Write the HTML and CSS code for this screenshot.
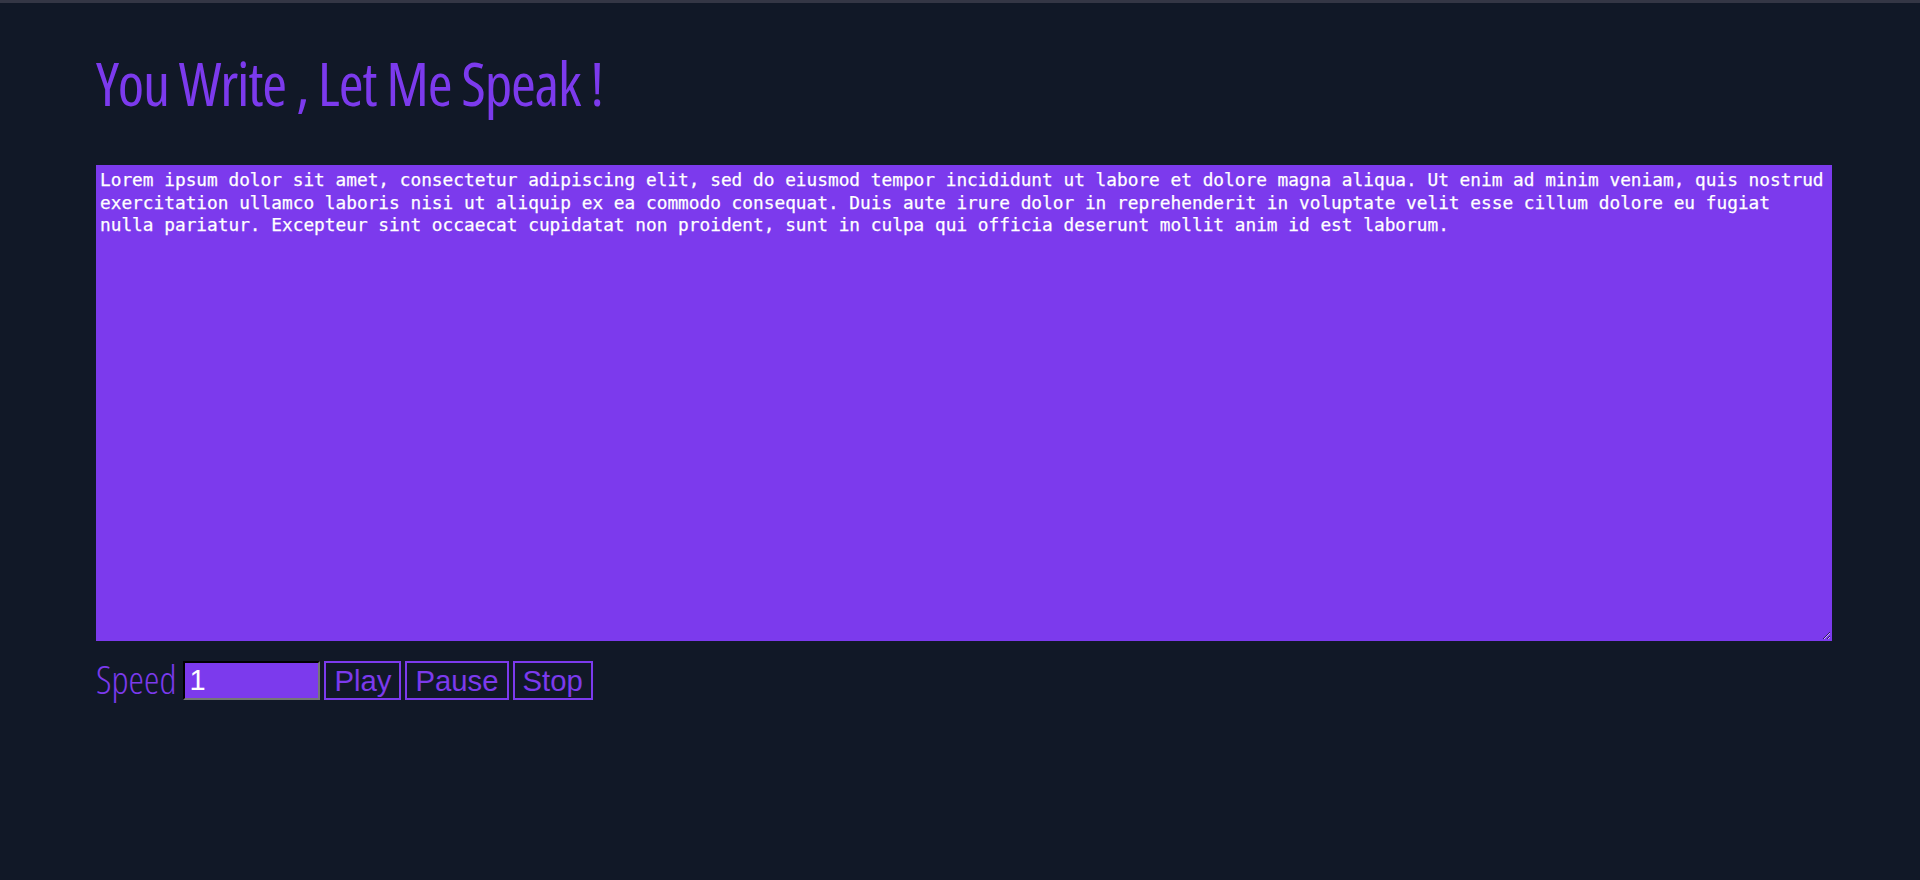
FILE: index.html
```html
<!DOCTYPE html>
<html lang="en">
<head>
<meta charset="utf-8">
<title>You Write , Let Me Speak !</title>
<link rel="stylesheet" href="styles.css">
</head>
<body>
<div class="topbar"></div>
<main class="page">
  <h1 class="title">You Write , Let Me Speak !</h1>
  <textarea class="editor" spellcheck="false">Lorem ipsum dolor sit amet, consectetur adipiscing elit, sed do eiusmod tempor incididunt ut labore et dolore magna aliqua. Ut enim ad minim veniam, quis nostrud exercitation ullamco laboris nisi ut aliquip ex ea commodo consequat. Duis aute irure dolor in reprehenderit in voluptate velit esse cillum dolore eu fugiat nulla pariatur. Excepteur sint occaecat cupidatat non proident, sunt in culpa qui officia deserunt mollit anim id est laborum.</textarea>
  <div class="controls">
    <label class="speed-label" for="speed">Speed</label>
    <input class="speed-input" id="speed" type="text" value="1">
    <button class="btn">Play</button>
    <button class="btn">Pause</button>
    <button class="btn">Stop</button>
  </div>
</main>
</body>
</html>
```
FILE: styles.css
```css
html, body {
  margin: 0;
  padding: 0;
  background: #111827;
  height: 100%;
}

.topbar {
  height: 3px;
  background: #343645;
}

.page {
  padding: 39px 88px 0 96px;
}

.title {
  margin: 0;
  font-family: "Open Sans", sans-serif;
  font-stretch: 75%;
  font-weight: 400;
  font-size: 60px;
  line-height: 83px;
  letter-spacing: -1.2px;
  color: #7c3aed;
}

.editor {
  display: block;
  box-sizing: border-box;
  width: 1736px;
  height: 476px;
  margin-top: 40px;
  padding: 3px 2px 2px 3px;
  border: 1px solid #7c3aed;
  background: #7c3aed;
  color: #ffffff;
  font-family: "DejaVu Sans Mono", monospace;
  font-size: 17.8px;
  line-height: 22.6px;
  outline: none;
  -webkit-text-stroke: 0.25px #ffffff;
}

.controls {
  display: flex;
  align-items: center;
  gap: 4px;
  margin-top: 20px;
}

.speed-label {
  font-family: "Open Sans", sans-serif;
  font-stretch: 75%;
  font-weight: 300;
  font-size: 39px;
  line-height: 39px;
  color: #7c3aed;
  margin-right: 3px;
  margin-top: -4px;
}

.speed-input {
  box-sizing: border-box;
  width: 137px;
  height: 39px;
  padding: 0 4px;
  border: 2px inset #767676;
  border-top-color: #2a2a2a;
  border-left-color: #2a2a2a;
  background: #7c3aed;
  color: #ffffff;
  font-family: "Liberation Sans", Arial, sans-serif;
  font-size: 29px;
}

.btn {
  box-sizing: border-box;
  height: 39px;
  padding: 0 8px;
  border: 2px solid #7c3aed;
  background: transparent;
  color: #7c3aed;
  font-family: "Liberation Sans", Arial, sans-serif;
  font-size: 29.3px;
  line-height: 1;
  cursor: pointer;
}
```
